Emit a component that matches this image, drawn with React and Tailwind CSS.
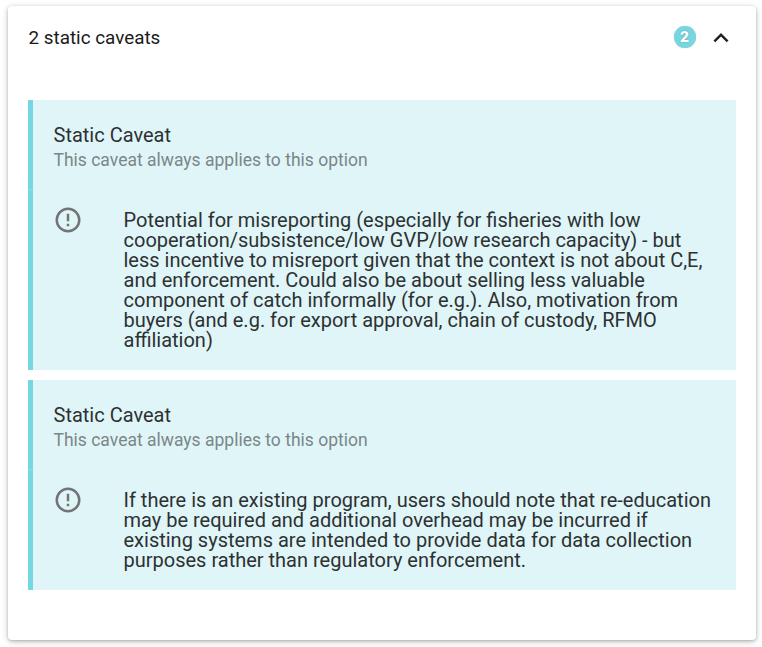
const caveats = [
  [
    'Potential for misreporting (especially for fisheries with low',
    'cooperation/subsistence/low GVP/low research capacity) - but',
    'less incentive to misreport given that the context is not about C,E,',
    'and enforcement. Could also be about selling less valuable',
    'component of catch informally (for e.g.). Also, motivation from',
    'buyers (and e.g. for export approval, chain of custody, RFMO',
    'affiliation)',
  ],
  [
    'If there is an existing program, users should note that re-education',
    'may be required and additional overhead may be incurred if',
    'existing systems are intended to provide data for data collection',
    'purposes rather than regulatory enforcement.',
  ],
];

function AlertIcon() {
  return (
    <svg viewBox="0 0 24 24" className="-ml-[0.5px] size-[30px] shrink-0 fill-[#727475]">
      <path d="M11 15h2v2h-2v-2m0-8h2v6h-2V7m1-5C6.47 2 2 6.5 2 12a10 10 0 0 0 10 10 10 10 0 0 0 10-10A10 10 0 0 0 12 2m0 18a8 8 0 0 1-8-8 8 8 0 0 1 8-8 8 8 0 0 1 8 8 8 8 0 0 1-8 8z" />
    </svg>
  );
}

function Caveat({ lines }) {
  return (
    <section className="bg-[#e0f5f8]">
      <header className="h-[89px] border-l-5 border-[#76d7e2] pt-[25px] pl-[20.5px]">
        <h2 className="text-[20px] leading-5 whitespace-nowrap text-[#2d3132]">Static Caveat</h2>
        <p className="mt-[5px] text-[17.5px] leading-5 whitespace-nowrap text-[#7b8688]">
          This caveat always applies to this option
        </p>
      </header>
      <div className="h-px w-[5px] bg-[#8adde6]" />
      <div className="flex border-l-5 border-[#76d7e2] pt-5 pb-5 pl-[20.5px]">
        <div className="-mt-[5px] w-[70px] shrink-0">
          <AlertIcon />
        </div>
        <p className="text-[20px] leading-5 whitespace-nowrap text-[#2d3132]">
          {lines.map((line) => (
            <span key={line} className="block">{line}</span>
          ))}
        </p>
      </div>
    </section>
  );
}

export default function App() {
  return (
    <div className="h-[647px] w-[762px] overflow-hidden bg-white pt-[6px] pl-2 font-[Roboto,sans-serif]">
      <main className="h-[634px] w-[748px] rounded bg-white px-5 shadow-[0_1px_3px_0_rgba(0,0,0,0.2),0_2px_6px_0_rgba(0,0,0,0.13),0_1px_8px_0_rgba(0,0,0,0.08)]">
        <header className="flex h-[94px] items-start pt-[17px]">
          <h1 className="mt-1 grow pl-[0.5px] text-[18.85px] leading-[22px] text-[#1a1a1a]">2 static caveats</h1>
          <span className="mt-[3px] mr-[10.5px] flex size-[22px] items-center justify-center rounded-full bg-[#76d7e2] pt-px text-[15.5px] leading-none font-black text-white shadow-[0_0_1px_rgba(0,0,0,0.3)] [text-shadow:0_0_2px_rgba(0,0,0,0.25)]">
            2
          </span>
          <svg viewBox="0 0 24 24" className="size-[30px] fill-[#212121]">
            <path d="M7.41 15.41 12 10.83l4.59 4.58L18 14l-6-6-6 6z" />
          </svg>
        </header>
        <div className="flex flex-col gap-[10px]">
          {caveats.map((lines) => (
            <Caveat key={lines[0]} lines={lines} />
          ))}
        </div>
      </main>
    </div>
  );
}
